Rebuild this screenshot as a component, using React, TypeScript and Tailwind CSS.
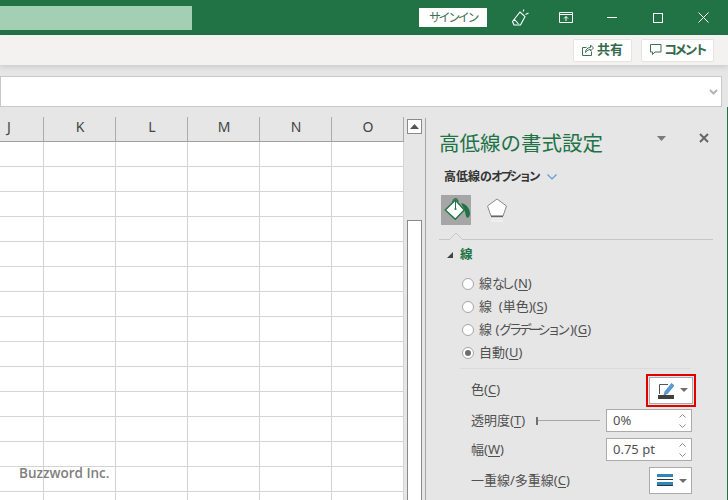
import React from "react";

const font = { fontFamily: '"Noto Sans", "Noto Sans CJK JP", sans-serif' };

const Under = ({ c }: { c: string }) => (
  <>
    (<span className="underline underline-offset-2">{c}</span>)
  </>
);

const Radio = ({ on, children }: { on?: boolean; children: React.ReactNode }) => (
  <div className="flex h-[23px] items-center">
    <span className="flex h-[12px] w-[12px] shrink-0 items-center justify-center rounded-full border border-[#a6a6a6] bg-white">
      {on && <span className="h-[6px] w-[6px] rounded-full bg-[#6e6e6e]" />}
    </span>
    <span className="ml-[5px] whitespace-nowrap text-[13px] leading-none text-[#505050]">{children}</span>
  </div>
);

const Spin = () => (
  <svg width="9" height="18" viewBox="0 0 9 18" className="shrink-0">
    <path d="M1.500 5.500 4.500 2.500 7.500 5.500M1.500 12.500 4.500 15.500 7.500 12.500" fill="none" stroke="#8a8a8a" strokeWidth="1" />
  </svg>
);

const Caret = () => (
  <svg width="8" height="4" viewBox="0 0 8 4">
    <path d="M0 0h8L4 4z" fill="#6e6e6e" />
  </svg>
);

export default function App() {
  return (
    <div style={font} className="relative flex h-[500px] w-[728px] flex-col overflow-hidden bg-[#e6e6e6]">
      {/* title bar */}
      <div className="flex h-[35px] shrink-0 items-center bg-[#217346]">
        <div className="h-[24px] w-[192px] shrink-0 bg-[#a3cfb5]" />
        <div className="ml-[227px] flex h-[19px] w-[68px] shrink-0 items-center justify-center bg-white text-[12px] tracking-[-2.4px] text-[#3f6f55]">
          サインイン
        </div>
        <svg width="18" height="18" viewBox="0 0 18 18" className="ml-[24px] shrink-0" fill="none" stroke="#fff" strokeWidth="1.100">
          <path d="M9 3 14 7.500 9.500 16H3L1.500 12.500zM3.500 10.500 7.500 15M12 2.500l1-2M14.500 5.500l3-1.500" />
        </svg>
        <svg width="14" height="11" viewBox="0 0 14 11" className="ml-[30px] shrink-0" fill="none" stroke="#fff" strokeWidth="1">
          <path d="M.5.5h13v10H.5zM.5 2.500h13M7 9V4.500M5 6.500l2-2 2 2" />
        </svg>
        <div className="ml-[34px] h-px w-[10px] shrink-0 bg-white" />
        <div className="ml-[36px] h-[10px] w-[10px] shrink-0 border border-white" />
        <svg width="11" height="11" viewBox="0 0 11 11" className="ml-[35px] shrink-0" stroke="#fff" strokeWidth="1">
          <path d="M.5.5l10 10M10.500.5l-10 10" />
        </svg>
      </div>

      {/* ribbon */}
      <div className="flex h-[30px] shrink-0 items-center justify-end bg-[#f3f2f1] pr-[14px] [box-shadow:0_2px_5px_rgba(0,0,0,0.12)]">
        <div className="flex h-[23px] w-[59px] items-center justify-center gap-[3px] rounded-[2px] border border-[#e6e4e2] bg-white text-[13px] font-bold text-[#35684c]">
          <svg width="12" height="12" viewBox="0 0 12 12" fill="none" stroke="#3f6f55" strokeWidth="1">
            <path d="M4.500 3.500h-4v8h9v-4M3.500 8.500c0-3 2-5 5-5V1L11.500 4 8.500 7V5.500C6.500 5.500 5 6.500 3.500 8.500z" />
          </svg>
          共有
        </div>
        <div className="ml-[9px] flex h-[23px] w-[73px] items-center justify-center gap-[2px] rounded-[2px] border border-[#e6e4e2] bg-white text-[13px] font-bold tracking-[-2.800px] text-[#35684c]">
          <svg width="12" height="12" viewBox="0 0 12 12" fill="none" stroke="#3f6f55" strokeWidth="1">
            <path d="M.5.5h10.500v7.500H5L2.500 10.500V8H.500z" />
          </svg>
          コメント
        </div>
      </div>

      {/* formula bar */}
      <div className="mt-[11px] flex h-[31px] w-[722px] shrink-0 items-center justify-end border border-[#c8c8c8] bg-white pr-[3px]">
        <svg width="9" height="6" viewBox="0 0 9 6" fill="none" stroke="#b4b4b4" strokeWidth="2">
          <path d="M1 1l3.500 3.500L8 1" />
        </svg>
      </div>

      <div className="flex min-h-0 flex-1">
        {/* sheet */}
        <div className="w-[404px] shrink-0 overflow-hidden bg-white">
          <div className="flex h-[35px] border-b border-[#a0a0a0] bg-[#e6e6e6] text-[14px] text-[#444444]">
            {["J", "K", "L", "M", "N", "O"].map((c, i) => (
              <div key={c} className={`relative flex h-full shrink-0 items-center justify-center pt-[5px] ${i === 0 ? "w-[44px] pl-[2px] pr-[28px]" : "w-[72px]"}`}>
                {c}
                <span className="absolute bottom-0 right-0 h-[24px] w-px bg-[#ababab]" />
              </div>
            ))}
          </div>
          {Array.from({ length: 15 }).map((_, r) => (
            <div key={r} className="flex h-[25px] border-b border-[#d4d4d4]">
              <div className="w-[44px] shrink-0 border-r border-[#d4d4d4]" />
              {[0, 1, 2, 3, 4].map((c) => (
                <div key={c} className="w-[72px] shrink-0 border-r border-[#d4d4d4]" />
              ))}
            </div>
          ))}
        </div>

        {/* scrollbar */}
        <div className="w-[21px] shrink-0 pl-[3px] pt-[12px]">
          <div className="flex h-[15px] w-[15px] items-center justify-center border border-[#8a8a8a] bg-white">
            <svg width="9" height="5" viewBox="0 0 9 5"><path d="M0 5 4.500 0 9 5z" fill="#555" /></svg>
          </div>
          <div className="mt-[86px] h-[300px] w-[15px] border border-[#8a8a8a] bg-white" />
        </div>

        {/* pane */}
        <div className="mt-[11px] flex-1 border-l border-[#a6a6a6] pl-[13px] pr-[13px] text-[#505050]">
          <div className="flex h-[37px] items-start pt-[11px]">
            <span className="text-[20.500px] leading-[28px] text-[#217346]">高低線の書式設定</span>
            <svg width="9" height="5" viewBox="0 0 9 5" className="ml-[54px] mt-[7px]"><path d="M0 0h9L4.500 5z" fill="#7a7a7a" /></svg>
            <svg width="10" height="10" viewBox="0 0 10 10" className="ml-[33px] mt-[4px]" stroke="#666" strokeWidth="2"><path d="M1 1l8 8M9 1 1 9" /></svg>
          </div>
          <div className="flex h-[30px] items-center pl-[5px] pt-[13px] text-[12px] font-bold text-[#333333]">
            <span>高低線</span>
            <span className="tracking-[-1px]">の</span>
            <span className="tracking-[-2.600px]">オプション</span>
            <svg width="10" height="6" viewBox="0 0 10 6" className="ml-[9px]" fill="none" stroke="#5b9bd5" strokeWidth="1.200"><path d="M.5.5 5 5 9.500.5" /></svg>
          </div>
          <div className="ml-[2px] mt-[10px] flex items-center">
            <div className="flex h-[30px] w-[30px] items-center justify-center bg-[#a6a6a6]">
              <svg width="30" height="30" viewBox="0 0 30 30">
                <path d="M20 8C25 9 29 13 29 19c-.5 4-3 5-4 2l-1.500-6z" fill="#217346" />
                <path d="M14.300 5 23.300 15 14.300 24.300 4.300 15z" fill="#fff" stroke="#217346" strokeWidth="1.400" />
                <path d="M12 8C11 3 17 2 17 7" fill="none" stroke="#217346" strokeWidth="1.200" />
                <path d="M14.500 6v7" stroke="#217346" strokeWidth="1" />
                <circle cx="14.500" cy="14" r="1.100" fill="#217346" />
              </svg>
            </div>
            <svg width="22" height="28" viewBox="0 0 22 28" className="ml-[15px]">
              <path d="M5 23h12l-1-2H6z" fill="#f4f4f4" />
              <path d="M11 3 20.500 10 17 20H5L1.500 10z" fill="#fff" stroke="#8a8a8a" strokeWidth="1" />
              <path d="M5 20.500h12" stroke="#666" strokeWidth="1.500" />
              <path d="M5 25h12" stroke="#f0f0f0" strokeWidth="2" />
            </svg>
          </div>
          <div className="relative mt-[14px] h-px w-[274px] bg-[#c6c6c6]">
            <svg width="14" height="8" viewBox="0 0 14 8" className="absolute -top-[7px] left-[10px]">
              <path d="M0 8 7 1l7 7" fill="#e6e6e6" stroke="#c6c6c6" />
            </svg>
          </div>
          <div className="flex h-[30px] items-center pl-[8px]">
            <svg width="6" height="6" viewBox="0 0 6 6"><path d="M6 0v6H0z" fill="#444" /></svg>
            <span className="ml-[7px] text-[12.500px] font-bold text-[#217346]">線</span>
          </div>
          <div className="pl-[23px] pt-[2px]">
            <Radio>線<span className="tracking-[-3.500px]">なし</span><span className="ml-[3px]"><Under c="N" /></span></Radio>
            <Radio>線&nbsp;&nbsp;(単色)<Under c="S" /></Radio>
            <Radio>線 (<span className="tracking-[-3.300px]">グラデーション</span><span className="ml-[3px]">)</span><Under c="G" /></Radio>
            <Radio on>自動<Under c="U" /></Radio>
          </div>
          <div className="ml-[21px] mt-[4px] h-px w-[230px] bg-[#dadada]" />
          <div className="ml-[32px] flex h-[38px] w-[225px] items-center justify-between pt-[4px] text-[13px]">
            <span>色<Under c="C" /></span>
            <div className="flex h-[33px] w-[50px] items-center justify-center border-2 border-[#e00000] p-[1px]">
              <div className="flex h-full w-full items-center justify-center gap-[6px] border border-[#ababab] bg-white pl-[3px]">
                <svg width="16" height="17" viewBox="0 0 16 17" fill="none">
                  <path d="M10 2.500H1.500V12" stroke="#555" />
                  <path d="M6 13 7 9.500 13.500 1.500l2.500 2-6.500 8z" fill="#5b9bd5" stroke="#2e75b6" strokeWidth=".6" />
                  <rect x="0" y="13" width="16" height="4" fill="#404040" />
                </svg>
                <Caret />
              </div>
            </div>
          </div>
          <div className="ml-[32px] mt-[2px] flex h-[23px] w-[221px] items-center text-[13px]">
            <span className="w-[65px] shrink-0 whitespace-nowrap">透明度<Under c="T" /></span>
            <div className="flex w-[64px] shrink-0 items-center">
              <span className="h-[8px] w-[2px] bg-[#707070]" />
              <span className="h-px flex-1 bg-[#a6a6a6]" />
            </div>
            <div className="ml-[6px] flex h-[23px] flex-1 items-center justify-between border border-[#ababab] bg-white pl-[6px] pr-[4px]">
              <span>0%</span>
              <Spin />
            </div>
          </div>
          <div className="ml-[32px] mt-[6px] flex h-[23px] w-[221px] items-center text-[13px]">
            <span className="flex-1">幅<Under c="W" /></span>
            <div className="flex h-[23px] w-[86px] items-center justify-between border border-[#ababab] bg-white pl-[6px] pr-[4px]">
              <span>0.75 pt</span>
              <Spin />
            </div>
          </div>
          <div className="ml-[32px] mt-[6px] flex h-[27px] w-[221px] items-center justify-between text-[13px]">
            <span className="whitespace-nowrap">一重線/多重線<Under c="C" /></span>
            <div className="flex h-[27px] w-[43px] items-center justify-center gap-[6px] border border-[#ababab] bg-white pl-[3px]">
              <svg width="16" height="13" viewBox="0 0 16 13">
                <rect x="0" y="0" width="16" height="3" fill="#2e86c1" />
                <rect x="0" y="5" width="16" height="1" fill="#333" />
                <rect x="0" y="8" width="16" height="3" fill="#2e86c1" />
                <rect x="0" y="11" width="16" height="1" fill="#333" />
              </svg>
              <Caret />
            </div>
          </div>
        </div>
        <div className="w-px shrink-0 bg-[#217346]" />
      </div>

      <span style={{ fontFamily: '"Open Sans", sans-serif' }} className="absolute left-[19px] top-[463px] text-[13.500px] font-semibold text-[#808080]">
        Buzzword Inc.
      </span>
    </div>
  );
}
